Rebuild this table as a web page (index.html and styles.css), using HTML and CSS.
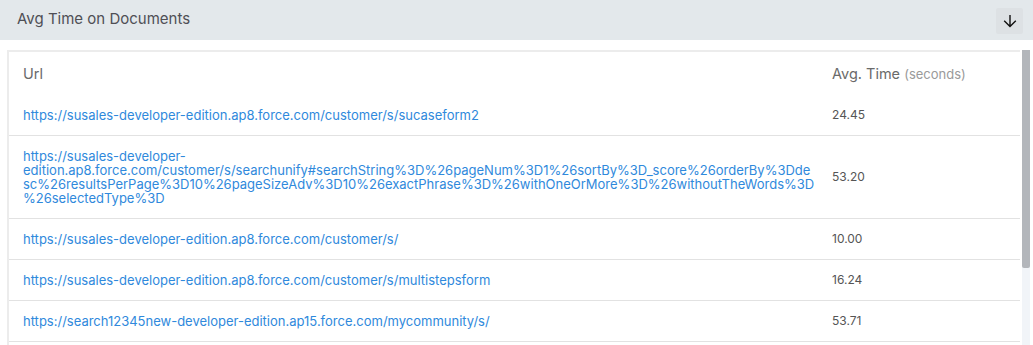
FILE: index.html
```html
<!DOCTYPE html>
<html>
<head>
  <title>Avg Time on Documents</title>
  <link rel="stylesheet" href="styles.css">
</head>
<body>
  <div class="panel">
    <div class="panel-header">
      <h2>Avg Time on Documents</h2>
      <button type="button" class="toggle-button" title="Collapse">
        <svg width="14" height="14" viewBox="0 0 14 14">
          <path d="M7 1V12.5M1.2 6.8L7 12.5L12.8 6.8" fill="none" stroke="#111" stroke-width="1.4"/>
        </svg>
      </button>
    </div>

    <div class="panel-body">
      <div class="card">
        <div class="table-wrap">
          <table class="report-table">
            <colgroup>
              <col>
              <col class="time-col">
            </colgroup>
            <thead>
              <tr>
                <th>Url</th>
                <th>Avg. Time <span class="unit">(seconds)</span></th>
              </tr>
            </thead>
            <tbody id="rows"></tbody>
          </table>
        </div>
        <div class="scrollbar">
          <div class="scroll-thumb"></div>
        </div>
      </div>
    </div>
  </div>

  <script>
    const rows = [
      { url: ['https://susales-developer-edition.ap8.force.com/customer/s/sucaseform2'], time: '24.45' },
      {
        url: [
          'https://susales-developer-',
          'edition.ap8.force.com/customer/s/searchunify#searchString%3D%26pageNum%3D1%26sortBy%3D_score%26orderBy%3Dde',
          'sc%26resultsPerPage%3D10%26pageSizeAdv%3D10%26exactPhrase%3D%26withOneOrMore%3D%26withoutTheWords%3D',
          '%26selectedType%3D'
        ],
        time: '53.20'
      },
      { url: ['https://susales-developer-edition.ap8.force.com/customer/s/'], time: '10.00' },
      { url: ['https://susales-developer-edition.ap8.force.com/customer/s/multistepsform'], time: '16.24' },
      { url: ['https://search12345new-developer-edition.ap15.force.com/mycommunity/s/'], time: '53.71' }
    ];

    const tbody = document.getElementById('rows');
    rows.forEach(row => {
      const tr = document.createElement('tr');

      const urlCell = document.createElement('td');
      const link = document.createElement('a');
      link.href = row.url.join('');
      row.url.forEach(part => {
        const line = document.createElement('span');
        line.className = 'url-line';
        line.textContent = part;
        link.appendChild(line);
      });
      urlCell.appendChild(link);
      tr.appendChild(urlCell);

      const timeCell = document.createElement('td');
      timeCell.className = 'time-cell';
      timeCell.textContent = row.time;
      tr.appendChild(timeCell);

      tbody.appendChild(tr);
    });
  </script>
</body>
</html>
```

FILE: styles.css
```css
body {
  margin: 0;
  font-family: Inter, "Open Sans", sans-serif;
  background-color: #fff;
  overflow: hidden;
}

.panel-header {
  display: flex;
  align-items: center;
  justify-content: space-between;
  height: 40px;
  padding: 0 10px 0 17px;
  background-color: #e3e8eb;
}

.panel-header h2 {
  margin: 0 0 4px;
  font-size: 15px;
  font-weight: 400;
  color: #4f4f55;
}

.toggle-button {
  display: flex;
  align-items: center;
  justify-content: center;
  width: 27px;
  height: 26px;
  margin-top: 2px;
  padding: 0;
  background-color: #dde1e4;
  border: none;
  border-radius: 2px;
  cursor: pointer;
}

.panel-body {
  padding: 10px 3px 0 7px;
}

.card {
  display: flex;
  height: 300px;
}

.table-wrap {
  flex: 1;
  overflow: hidden;
  border-top: 2px solid #ececec;
  border-left: 2px solid #ececec;
}

.scrollbar {
  width: 8px;
  margin-left: 2px;
  background-color: #f1f4f8;
}

.scroll-thumb {
  height: 218px;
  background-color: #b3b6bb;
  border-radius: 0 0 2px 2px;
}

.report-table {
  width: 100%;
  border-collapse: collapse;
  table-layout: fixed;
}

.time-col {
  width: 202px;
}

.report-table th {
  height: 43px;
  padding: 0 14px;
  text-align: left;
  font-size: 14.5px;
  font-weight: 400;
  color: #6a6a6a;
  vertical-align: middle;
}

.report-table th .unit {
  font-size: 13px;
  color: #9a9a9a;
}

.report-table td {
  padding: 13px 14px;
  border-bottom: 1px solid #e2e2e2;
  font-size: 13px;
  line-height: 14px;
  vertical-align: middle;
}

.report-table a {
  display: block;
  color: #2f89dc;
  text-decoration: none;
}

.url-line {
  display: block;
  white-space: nowrap;
}

.time-cell {
  color: #555;
}

.report-table td.time-cell {
  font-size: 12px;
}
```
